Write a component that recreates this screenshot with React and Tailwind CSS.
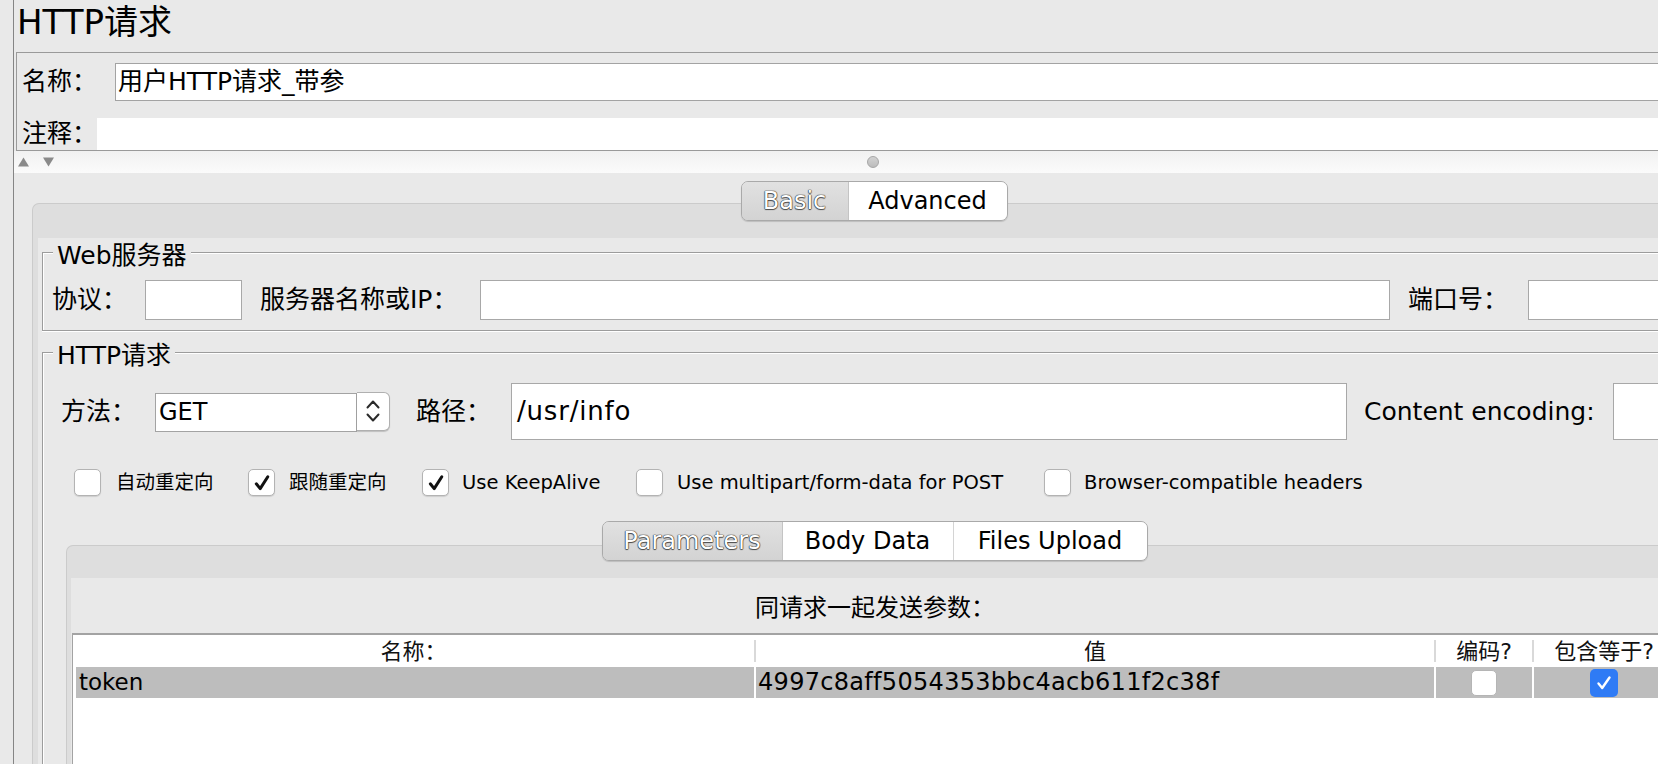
import React from "react";

const FONT = "font-['DejaVu_Sans','Noto_Sans_CJK_SC',sans-serif]";

function Check({ checked }) {
  return (
    <div className="w-[27px] h-[27px] shrink-0 rounded-[5px] border border-[#b3b3b3] bg-white shadow-[0_1px_1px_rgba(0,0,0,0.12)] flex items-center justify-center">
      {checked && (
        <svg width="20" height="20" viewBox="0 0 20 20">
          <path d="M4.3 10.8 L8.2 15.6 L15.8 3.8" fill="none" stroke="#111111" strokeWidth="3" strokeLinecap="round" strokeLinejoin="round" />
        </svg>
      )}
    </div>
  );
}

function Group({ title, className, children }) {
  return (
    <div className={`relative border border-[#9c9c9c] shadow-[inset_1px_1px_0_#ffffff,0_1px_0_#ffffff] ${className}`}>
      <div className="absolute left-[10px] top-[-12px] px-[4px] bg-[#e9e9e9] text-[25px] leading-[30px] whitespace-nowrap">{title}</div>
      {children}
    </div>
  );
}

const selText = "text-white [text-shadow:0_0_1px_#222,0_0_1px_#333,0_0_1px_#444,0_1px_1px_#555]";

export default function App() {
  return (
    <div className={`w-[1658px] h-[764px] overflow-hidden bg-[#e9e9e9] flex text-black ${FONT}`}>
      <div className="w-[13px] shrink-0" />
      <div className="w-[1px] shrink-0 bg-[#858585]" />
      <div className="w-[1720px] shrink-0 flex flex-col">
        {/* Title */}
        <div className="h-[52px] shrink-0 pl-[3px] text-[34px] leading-[44px] whitespace-nowrap">HTTP请求</div>

        {/* Name / comment panel */}
        <div className="ml-[2px] h-[99px] shrink-0 border-y border-l border-[#9a9a9a] pt-[10px]">
          <div className="flex h-[38px] items-center">
            <div className="w-[98px] shrink-0 pl-[5px] text-[25px] leading-[30px] whitespace-nowrap">名称：</div>
            <div className="flex-1 h-full border border-[#a3a3a3] bg-white pl-[2px] text-[25px] leading-[36px] whitespace-nowrap">用户HTTP请求_带参</div>
          </div>
          <div className="mt-[17px] flex h-[32px] items-center">
            <div className="w-[80px] shrink-0 pl-[5px] text-[25px] leading-[30px] whitespace-nowrap">注释：</div>
            <div className="flex-1 h-full bg-white" />
          </div>
        </div>

        {/* Splitter */}
        <div className="relative h-[22px] shrink-0 bg-gradient-to-b from-[#f1f1f1] to-[#fbfbfb] flex items-center pl-[4px]">
          <svg width="38" height="12" viewBox="0 0 38 12">
            <path d="M0 10.5 L5.5 1.5 L11 10.5 Z" fill="#8a8a8a" />
            <path d="M25 1.5 L36 1.5 L30.5 10.5 Z" fill="#8a8a8a" />
          </svg>
          <div className="absolute left-[853px] top-[5px] w-[12px] h-[12px] rounded-full border border-[#a6a6a6] bg-gradient-to-b from-[#d2d2d2] to-[#bcbcbc]" />
        </div>

        {/* Main tabbed pane */}
        <div className="flex-1 flex flex-col">
          <div className="relative z-10 mt-[8px] mb-[-18px] flex justify-center">
            <div className="flex h-[40px] rounded-[7px] border border-[#a9a9a9] shadow-[0_1px_1px_rgba(0,0,0,0.15)] overflow-hidden text-[24px]">
              <div className={`w-[106px] bg-gradient-to-b from-[#e1e1e1] to-[#d3d3d3] flex items-center justify-center ${selText}`}>Basic</div>
              <div className="w-[159px] bg-white border-l border-[#c4c4c4] flex items-center justify-center">Advanced</div>
            </div>
          </div>
          <div className="mx-[18px] flex-1 border-t border-l border-[#cbcbcb] rounded-t-[7px] bg-[#dedede] pt-[34px] pl-[5px] pr-[5px] flex flex-col">
            <div className="flex-1 bg-[#e9e9e9] pt-[14px] pl-[4px] pr-[4px]">
              {/* Web server group */}
              <Group title="Web服务器" className="h-[79px]">
                <div className="mt-[27px] flex h-[40px] items-center pl-[9px] text-[25px] whitespace-nowrap">
                  <div className="w-[93px] shrink-0">协议：</div>
                  <div className="w-[97px] h-full shrink-0 border border-[#a8a8a8] bg-white" />
                  <div className="ml-[18px] w-[220px] shrink-0">服务器名称或IP：</div>
                  <div className="w-[910px] h-full shrink-0 border border-[#a8a8a8] bg-white" />
                  <div className="ml-[18px] w-[120px] shrink-0">端口号：</div>
                  <div className="w-[200px] h-full shrink-0 border border-[#a8a8a8] bg-white" />
                </div>
              </Group>

              {/* HTTP request group */}
              <Group title="HTTP请求" className="mt-[21px] h-[520px]">
                <div className="mt-[30px] flex h-[57px] items-center pl-[18px] text-[25px] whitespace-nowrap">
                  <div className="w-[94px] shrink-0">方法：</div>
                  <div className="flex w-[235px] h-[40px] shrink-0 items-start">
                    <div className="w-[202px] h-[39px] mt-[1px] border border-[#a3a3a3] bg-white pl-[3px] text-[24px] leading-[37px]">GET</div>
                    <div className="w-[33px] h-[39px] rounded-r-[6px] border border-l-0 border-[#b0b0b0] bg-white shadow-[0_1px_1px_rgba(0,0,0,0.18)] flex items-center justify-center">
                      <svg width="16" height="28" viewBox="0 0 16 28">
                        <path d="M2.5 10.5 L8 4.5 L13.5 10.5" fill="none" stroke="#2a2a2a" strokeWidth="2" strokeLinecap="round" strokeLinejoin="round" />
                        <path d="M2.5 17.5 L8 23.5 L13.5 17.5" fill="none" stroke="#2a2a2a" strokeWidth="2" strokeLinecap="round" strokeLinejoin="round" />
                      </svg>
                    </div>
                  </div>
                  <div className="ml-[26px] w-[95px] shrink-0">路径：</div>
                  <div className="w-[836px] h-full shrink-0 border border-[#a8a8a8] bg-white pl-[5px] text-[26px] tracking-[0.8px] leading-[55px]">/usr/info</div>
                  <div className="ml-[17px] w-[249px] shrink-0">Content encoding:</div>
                  <div className="w-[200px] h-full shrink-0 border border-[#a8a8a8] bg-white" />
                </div>

                <div className="mt-[29px] flex h-[27px] items-center pl-[31px] text-[19.5px] whitespace-nowrap">
                  <div className="w-[174px] shrink-0 flex items-center"><Check /><span className="ml-[15px]">自动重定向</span></div>
                  <div className="w-[174px] shrink-0 flex items-center"><Check checked /><span className="ml-[14px]">跟随重定向</span></div>
                  <div className="w-[214px] shrink-0 flex items-center"><Check checked /><span className="ml-[13px]">Use KeepAlive</span></div>
                  <div className="w-[408px] shrink-0 flex items-center"><Check /><span className="ml-[14px]">Use multipart/form-data for POST</span></div>
                  <div className="shrink-0 flex items-center"><Check /><span className="ml-[13px]">Browser-compatible headers</span></div>
                </div>

                {/* Parameters pane */}
                <div className="mt-[25px] relative z-10 mb-[-16px] flex justify-center">
                  <div className="flex h-[40px] rounded-[7px] border border-[#a9a9a9] shadow-[0_1px_1px_rgba(0,0,0,0.15)] overflow-hidden text-[24px] whitespace-nowrap">
                    <div className={`w-[179px] bg-gradient-to-b from-[#e1e1e1] to-[#d3d3d3] flex items-center justify-center ${selText}`}>Parameters</div>
                    <div className="w-[171px] bg-white border-l border-[#c4c4c4] flex items-center justify-center">Body Data</div>
                    <div className="w-[194px] bg-white border-l border-[#d4d4d4] flex items-center justify-center">Files Upload</div>
                  </div>
                </div>
                <div className="mx-[23px] h-[300px] border-t border-l border-[#cbcbcb] rounded-t-[7px] bg-[#dedede] pt-[32px] pl-[4px] pr-[4px]">
                  <div className="h-full bg-[#e9e9e9]">
                    <div className="h-[55px] pt-[4px] flex items-center justify-center text-[24px] whitespace-nowrap">同请求一起发送参数：</div>
                    <div className="ml-[1px] h-[200px] border-t-2 border-l border-[#a3a3a3] bg-white">
                      <div className="flex h-[32px] items-center text-[22px] text-[#111] whitespace-nowrap">
                        <div className="w-[681px] shrink-0 text-center">名称：</div>
                        <div className="w-[2px] h-[22px] shrink-0 bg-[#d9d9d9]" />
                        <div className="w-[678px] shrink-0 text-center">值</div>
                        <div className="w-[2px] h-[22px] shrink-0 bg-[#d9d9d9]" />
                        <div className="w-[96px] shrink-0 text-center">编码?</div>
                        <div className="w-[2px] h-[22px] shrink-0 bg-[#d9d9d9]" />
                        <div className="w-[140px] shrink-0 text-center">包含等于?</div>
                      </div>
                      <div className="flex h-[31px] pl-[3px] text-[23px] whitespace-nowrap">
                        <div className="w-[678px] shrink-0 bg-[#bdbdbd] pl-[3px] leading-[31px]">token</div>
                        <div className="w-[2px] shrink-0 bg-white" />
                        <div className="w-[678px] shrink-0 bg-[#bdbdbd] pl-[2px] text-[24px] tracking-[0.3px] leading-[31px]">4997c8aff5054353bbc4acb611f2c38f</div>
                        <div className="w-[2px] shrink-0 bg-white" />
                        <div className="w-[96px] shrink-0 bg-[#bdbdbd] flex items-center justify-center">
                          <div className="w-[26px] h-[26px] rounded-[5px] border border-[#b5b5b5] bg-white" />
                        </div>
                        <div className="w-[2px] shrink-0 bg-white" />
                        <div className="w-[140px] shrink-0 bg-[#bdbdbd] flex items-center justify-center">
                          <div className="w-[28px] h-[28px] rounded-[5px] bg-[#2f7bf5] flex items-center justify-center">
                            <svg width="20" height="20" viewBox="0 0 20 20">
                              <path d="M4.5 10.5 L8.2 15 L15.5 4.5" fill="none" stroke="#ffffff" strokeWidth="2.4" strokeLinecap="round" strokeLinejoin="round" />
                            </svg>
                          </div>
                        </div>
                      </div>
                    </div>
                  </div>
                </div>
              </Group>
            </div>
          </div>
        </div>
      </div>
    </div>
  );
}
